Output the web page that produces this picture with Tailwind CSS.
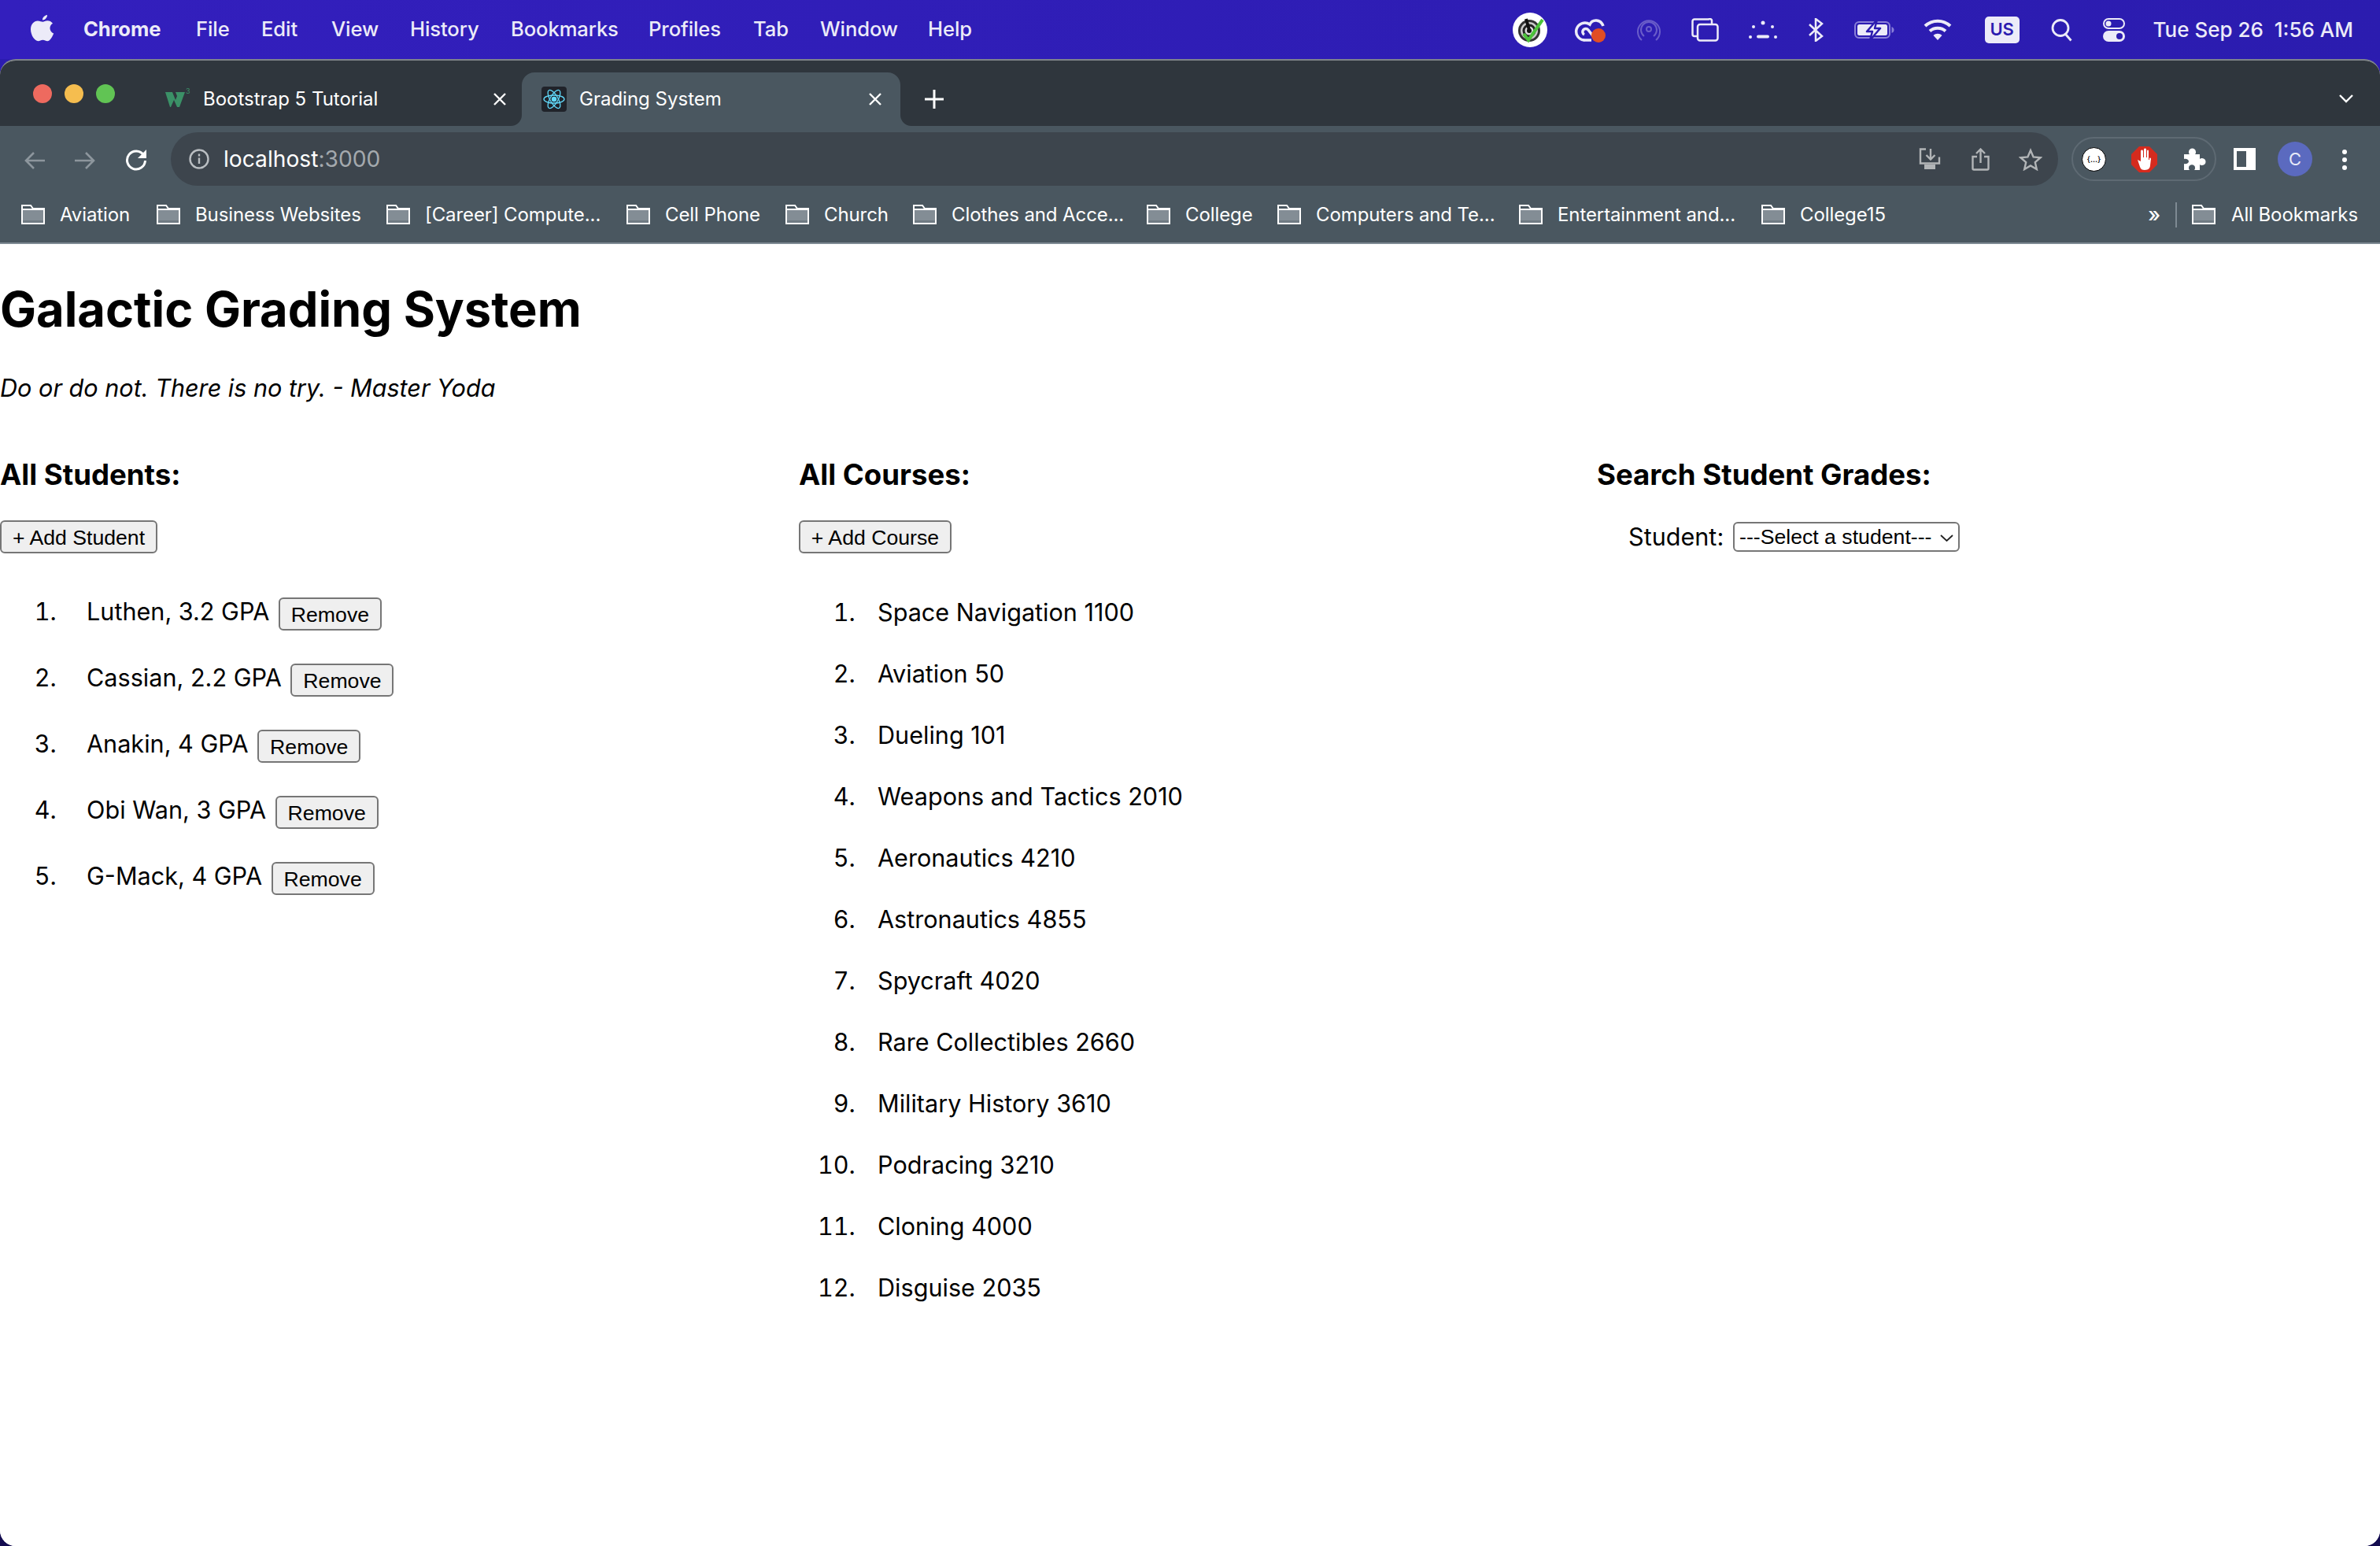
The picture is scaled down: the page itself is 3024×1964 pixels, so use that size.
<!DOCTYPE html>
<html lang="en">
<head>
<meta charset="utf-8">
<title>Grading System</title>
<script src="https://cdn.jsdelivr.net/npm/@tailwindcss/browser@4"></script>
</head>
<body class="m-0 w-[3024px] h-[1964px] overflow-hidden bg-gradient-to-b from-[#2c1cb0] from-10% to-[#140c50] to-95% font-['Inter',sans-serif] text-black">

<!-- macOS menu bar -->
<header class="h-[75px] flex items-center bg-gradient-to-r from-[#331fbd] to-[#2b1caf] text-[#ecebf8] text-[25.6px] font-medium tracking-[-0.1px]">
  <svg class="ml-[39px] w-[30px] h-[34px] mb-[4px]" viewBox="0 0 30 34" fill="#ecebf8"><path d="M21 0c.3 3-2.600 6.600-6 6.500C14.600 3.500 17.800.4 21 0zM15.300 8.700c1.500 0 3.300-1.500 6.100-1.500 2.300 0 4.900 1.100 6.600 3.500-5.300 3-4.400 10.500 1.200 12.700-1.200 3.100-4.500 9.800-7.900 9.800-2.300 0-3.500-1.500-5.900-1.500s-3.800 1.500-5.900 1.500C5 33.200 0 25.500 0 18.300 0 11.600 4.300 7.400 8.900 7.400c2.900 0 4.900 1.300 6.400 1.300z"/></svg>
  <nav class="flex items-center ml-[37px]">
    <span class="w-[143px] font-bold">Chrome</span>
    <span class="w-[83px]">File</span>
    <span class="w-[89px]">Edit</span>
    <span class="w-[100px]">View</span>
    <span class="w-[128px]">History</span>
    <span class="w-[175px]">Bookmarks</span>
    <span class="w-[133px]">Profiles</span>
    <span class="w-[85px]">Tab</span>
    <span class="w-[137px]">Window</span>
    <span>Help</span>
  </nav>
  <div class="ml-auto flex items-center h-full pr-[34px]">
    <!-- profile radar -->
    <svg class="w-[44px] h-[44px]" viewBox="0 0 44 44"><circle cx="22" cy="22" r="22" fill="#fff"/><circle cx="21" cy="23" r="14" fill="#333"/><circle cx="21" cy="23" r="11" fill="#ccc"/><circle cx="21" cy="23" r="8.500" fill="#222"/><circle cx="21" cy="23" r="5.500" fill="#ddd"/><circle cx="21" cy="23" r="3" fill="#111"/><path d="M17 8l4 14" stroke="#111" stroke-width="4"/><path d="M14 27l6 8L38 9" fill="none" stroke="#4cc33a" stroke-width="4"/></svg>
    <!-- creative cloud -->
    <svg class="ml-[34px] w-[42px] h-[32px]" viewBox="0 0 42 32" fill="none" stroke="#ecebf8" stroke-width="3.500"><path d="M13 29a11 11 0 1 1 7-20c3-7 14-7 17 2"/><path d="M13 22a4 4 0 1 1 5-6l7 9"/><path d="M12 29h10"/><circle cx="31" cy="23" r="9" fill="#e14d24" stroke="none"/></svg>
    <!-- airdrop -->
    <svg class="ml-[38px] w-[30px] h-[30px]" viewBox="0 0 30 30" fill="none" stroke="#6a5dc9" stroke-width="2"><circle cx="15" cy="14" r="3"/><path d="M9 23a10 10 0 1 1 12 0"/><path d="M6 28a14 14 0 1 1 18 0"/></svg>
    <!-- stage manager -->
    <svg class="ml-[39px] w-[35px] h-[30px]" viewBox="0 0 35 30" fill="none" stroke="#ecebf8" stroke-width="2.500"><path d="M7 23H4a2.500 2.500 0 0 1-2.500-2.500V4A2.500 2.500 0 0 1 4 1.500h18A2.500 2.500 0 0 1 26 4v3"/><rect x="8" y="8" width="25.500" height="20.500" rx="3"/></svg>
    <!-- dots -->
    <svg class="ml-[38px] w-[36px] h-[24px]" viewBox="0 0 36 24" fill="#ecebf8"><circle cx="18" cy="3" r="2.500"/><circle cx="6" cy="8" r="2"/><circle cx="30" cy="8" r="2"/><circle cx="2" cy="21" r="2"/><circle cx="34" cy="21" r="2"/><rect x="10" y="18.500" width="16" height="4" rx="2"/></svg>
    <!-- bluetooth -->
    <svg class="ml-[40px] w-[19px] h-[30px]" viewBox="0 0 19 30" fill="none" stroke="#ecebf8" stroke-width="2.500"><path d="M1 8l16 15-8 6V1l8 6L1 22"/></svg>
    <!-- battery -->
    <svg class="ml-[39px] w-[51px] h-[26px]" viewBox="0 0 51 26"><rect x="1" y="3" width="44" height="20" rx="5" fill="none" stroke="#8a80d8" stroke-width="2"/><rect x="4" y="6" width="38" height="14" rx="2.500" fill="#ecebf8"/><path d="M47.500 9v8c2-1 3-2 3-4s-1-3-3-4z" fill="#8a80d8"/><path d="M29 0L16 15h7l-3 11 13-15h-7z" fill="#ecebf8" stroke="#2c1cb0" stroke-width="2.500" stroke-linejoin="round"/></svg>
    <!-- wifi -->
    <svg class="ml-[37px] w-[36px] h-[28px]" viewBox="0 0 36 28" fill="none" stroke="#ecebf8" stroke-width="4"><path d="M2 9c9-8.500 23-8.500 32 0"/><path d="M8 15.500c5.500-5 14.500-5 20 0"/><path d="M18 27l-5.500-6c3-3 8-3 11 0z" fill="#ecebf8" stroke="none"/></svg>
    <!-- US -->
    <span class="ml-[42px] w-[44px] h-[34px] rounded-[5px] bg-[#ecebf8] text-[#2c1cb0] text-[22px] font-semibold flex items-center justify-center">US</span>
    <!-- search -->
    <svg class="ml-[40px] w-[27px] h-[30px]" viewBox="0 0 27 30" fill="none" stroke="#ecebf8" stroke-width="2.800"><circle cx="12" cy="12.500" r="10"/><path d="M18.500 20.500l7 8"/></svg>
    <!-- control centre -->
    <svg class="ml-[39px] w-[28px] h-[30px]" viewBox="0 0 28 30"><rect x="1" y="1" width="26" height="12" rx="6" fill="none" stroke="#ecebf8" stroke-width="2"/><circle cx="7" cy="7" r="3.500" fill="#ecebf8"/><rect y="16" width="28" height="14" rx="7" fill="#ecebf8"/><circle cx="21" cy="23" r="4" fill="#2c1cb0"/></svg>
    <span class="ml-[36px] whitespace-pre text-[26px] tracking-[0px]">Tue Sep 26  1:56 AM</span>
  </div>
</header>

<!-- window -->
<div class="h-[1889px] rounded-[20px] bg-white overflow-hidden flex flex-col border-t-2 border-[#7e8489]">
  <!-- tab strip -->
  <div class="h-[83px] shrink-0 bg-[#2f363d] flex items-end text-white text-[24px]">
    <div class="flex gap-[16px] ml-[42px] self-start mt-[30px]">
      <span class="w-[24px] h-[24px] rounded-full bg-[#ee6a5f]"></span>
      <span class="w-[24px] h-[24px] rounded-full bg-[#f5bd4f]"></span>
      <span class="w-[24px] h-[24px] rounded-full bg-[#61c454]"></span>
    </div>
    <div class="w-[453px] h-[68px] ml-[64px] flex items-center">
      <svg class="w-[33px] h-[30px]" viewBox="0 0 33 30"><path d="M0 6h9l4 10 2-5-2-5h12l-7 19h-3l-4-9-4 9H6z" fill="#3b9167"/><text x="26" y="8" font-size="9" fill="#3b9167">3</text></svg>
      <span class="ml-[15px] w-[368px]">Bootstrap 5 Tutorial</span>
      <svg class="w-[18px] h-[18px]" viewBox="0 0 18 18" stroke="#fff" stroke-width="2.400"><path d="M2 2l14 14M16 2L2 16"/></svg>
    </div>
    <div class="relative w-[481px] h-[68px] rounded-t-[16px] bg-[#4a5760] flex items-center pl-[25px]">
      <svg class="absolute left-[-14px] bottom-0 w-[14px] h-[14px]" viewBox="0 0 14 14" fill="#4a5760"><path d="M14 0v14H0A14 14 0 0 0 14 0z"/></svg>
      <svg class="absolute right-[-14px] bottom-0 w-[14px] h-[14px]" viewBox="0 0 14 14" fill="#4a5760"><path d="M0 0v14h14A14 14 0 0 1 0 0z"/></svg>
      <span class="w-[32px] h-[32px] bg-[#20232a] rounded-[4px] flex items-center justify-center">
        <svg class="w-[30px] h-[30px]" viewBox="0 0 30 30" fill="none" stroke="#61dafb" stroke-width="1.300"><circle cx="15" cy="15" r="2.600" fill="#61dafb"/><ellipse cx="15" cy="15" rx="13" ry="5"/><ellipse cx="15" cy="15" rx="13" ry="5" transform="rotate(60 15 15)"/><ellipse cx="15" cy="15" rx="13" ry="5" transform="rotate(120 15 15)"/></svg>
      </span>
      <span class="ml-[16px] w-[367px]">Grading System</span>
      <svg class="w-[18px] h-[18px]" viewBox="0 0 18 18" stroke="#fff" stroke-width="2.400"><path d="M2 2l14 14M16 2L2 16"/></svg>
    </div>
    <svg class="ml-[31px] mb-[22px] w-[24px] h-[24px]" viewBox="0 0 24 24" stroke="#fff" stroke-width="3"><path d="M12 0v24M0 12h24"/></svg>
    <svg class="ml-auto mr-[34px] mb-[29px] w-[18px] h-[11px]" viewBox="0 0 18 11" fill="none" stroke="#fff" stroke-width="2.400"><path d="M1 1l8 8 8-8"/></svg>
  </div>

  <!-- toolbar -->
  <div class="h-[85px] shrink-0 bg-[#4a5760] flex items-start pt-[8px] relative">
    <svg class="ml-[31px] mt-[24px] w-[26px] h-[24px]" viewBox="0 0 26 24" fill="none" stroke="#8d969d" stroke-width="2.600"><path d="M26 12H2M12 2L2 12l10 10"/></svg>
    <svg class="ml-[38px] mt-[24px] w-[26px] h-[24px]" viewBox="0 0 26 24" fill="none" stroke="#8d969d" stroke-width="2.600"><path d="M0 12h24M14 2l10 10-10 10"/></svg>
    <svg class="ml-[38px] mt-[21px] w-[28px] h-[28px]" viewBox="0 0 28 28" fill="none" stroke="#fff" stroke-width="3"><path d="M23.500 8A11.500 11.500 0 1 0 25.500 15"/><path d="M27 1v11H16z" fill="#fff" stroke="none"/></svg>
    <div class="ml-[30px] w-[2398px] h-[68px] rounded-full bg-[#3d454d] flex items-center pl-[23px] pr-[20px]">
      <svg class="w-[26px] h-[26px]" viewBox="0 0 26 26" fill="none" stroke="#b9bec2" stroke-width="2.400"><circle cx="13" cy="13" r="11.500"/><path d="M13 11.500v7.500"/><path d="M13 6.500v3" /></svg>
      <span class="ml-[18px] text-[28.2px] text-white">localhost<span class="text-[#a4a9ad]">:3000</span></span>
      <svg class="ml-auto w-[28px] h-[28px]" viewBox="0 0 28 28" fill="none" stroke="#b2b5b7" stroke-width="2.400"><path d="M9 1.500H2v18h24v-8"/><path d="M15 1v13M9.500 9l5.500 5.500L20.500 9"/><rect x="7" y="21" width="14" height="6" fill="#b2b5b7" stroke="none"/></svg>
      <svg class="ml-[39px] w-[23px] h-[29px]" viewBox="0 0 23 29" fill="none" stroke="#b2b5b7" stroke-width="2.400"><path d="M7 11H1.500v15a1.500 1.500 0 0 0 1.500 1.500h17a1.500 1.500 0 0 0 1.500-1.500V11H16"/><path d="M11.500 19V2M6 7l5.500-5.500L17 7"/></svg>
      <svg class="ml-[37px] w-[30px] h-[29px]" viewBox="0 0 30 29" fill="none" stroke="#b2b5b7" stroke-width="2.400"><path d="M15 3l3.600 8.400 9 .8-6.800 6 2 8.800L15 22.400 7.200 27l2-8.800-6.800-6 9-.8z"/></svg>
    </div>
    <div class="ml-[17px] mt-[6px] w-[184px] h-[56px] rounded-full border-2 border-[#5e6a73] flex items-center pl-[11px]">
      <span class="w-[31px] h-[31px] rounded-full bg-white border border-black text-black text-[10px] font-medium flex items-center justify-center">{...}</span>
      <svg class="ml-[32px] w-[33px] h-[33px]" viewBox="0 0 33 33"><path d="M10 0h13l10 10v13L23 33H10L0 23V10z" fill="#d52b1e"/><path d="M8 17l3 9c1 3 3 4 6 4 5 0 7-3 7-6l1-8c0-2-2-2-2-.5V17h-1V6c0-2-2-2-2 0v8h-1V4c0-2-3-2-3 0v10h-1V6c0-2-3-2-3 0v13z" fill="#fff"/></svg>
      <svg class="ml-[33px] w-[30px] h-[29px]" viewBox="0 0 30 29" fill="#fff"><path d="M1 8h7c-1-1-1-2-1-3 0-6 9-6 9 0 0 1 0 2-1 3h6v6c1-1 2-1 3-1 6 0 6 9 0 9-1 0-2 0-3-1v7H14c1-1 1-2 1-3 0-5-8-5-8 0 0 1 0 2 1 3H1v-8c3 1 6-1 6-3s-3-4-6-3z"/></svg>
    </div>
    <svg class="ml-[22px] mt-[20px] w-[28px] h-[28px]" viewBox="0 0 28 28"><path fill="#fff" fill-rule="evenodd" d="M0 0h28v28H0zM4 4v20h12V4z"/></svg>
    <span class="ml-[28px] mt-[12px] w-[44px] h-[44px] rounded-full bg-[#5b6abf] text-[#e7e9f7] text-[22px] flex items-center justify-center">C</span>
    <svg class="ml-[36px] mt-[21px] w-[10px] h-[28px]" viewBox="0 0 10 28" fill="#fff"><circle cx="5" cy="4" r="3"/><circle cx="5" cy="14" r="3"/><circle cx="5" cy="24" r="3"/></svg>
  </div>

  <!-- bookmarks bar -->
  <div class="h-[65px] shrink-0 bg-[#4a5760] border-b-2 border-[#7e8a93] flex items-center pb-[8px] pl-[27px] text-white text-[24px] tracking-[-0.1px]">
    <div class="w-[172px] flex items-center gap-[19px]"><svg class="w-[30px] h-[25px]" viewBox="0 0 30 25"><path d="M1 1h11l3 4h14v19H1z" fill="#4a5760" stroke="#fff" stroke-width="2"/><rect x="2" y="7" width="26" height="16" fill="#838d95"/><rect x="2" y="20" width="26" height="3" fill="#6f7a83"/><path d="M1 6h28" stroke="#fff" stroke-width="2"/></svg><span>Aviation</span></div>
    <div class="w-[292px] flex items-center gap-[19px]"><svg class="w-[30px] h-[25px]" viewBox="0 0 30 25"><path d="M1 1h11l3 4h14v19H1z" fill="#4a5760" stroke="#fff" stroke-width="2"/><rect x="2" y="7" width="26" height="16" fill="#838d95"/><rect x="2" y="20" width="26" height="3" fill="#6f7a83"/><path d="M1 6h28" stroke="#fff" stroke-width="2"/></svg><span>Business Websites</span></div>
    <div class="w-[305px] flex items-center gap-[19px]"><svg class="w-[30px] h-[25px]" viewBox="0 0 30 25"><path d="M1 1h11l3 4h14v19H1z" fill="#4a5760" stroke="#fff" stroke-width="2"/><rect x="2" y="7" width="26" height="16" fill="#838d95"/><rect x="2" y="20" width="26" height="3" fill="#6f7a83"/><path d="M1 6h28" stroke="#fff" stroke-width="2"/></svg><span>[Career] Compute...</span></div>
    <div class="w-[202px] flex items-center gap-[19px]"><svg class="w-[30px] h-[25px]" viewBox="0 0 30 25"><path d="M1 1h11l3 4h14v19H1z" fill="#4a5760" stroke="#fff" stroke-width="2"/><rect x="2" y="7" width="26" height="16" fill="#838d95"/><rect x="2" y="20" width="26" height="3" fill="#6f7a83"/><path d="M1 6h28" stroke="#fff" stroke-width="2"/></svg><span>Cell Phone</span></div>
    <div class="w-[162px] flex items-center gap-[19px]"><svg class="w-[30px] h-[25px]" viewBox="0 0 30 25"><path d="M1 1h11l3 4h14v19H1z" fill="#4a5760" stroke="#fff" stroke-width="2"/><rect x="2" y="7" width="26" height="16" fill="#838d95"/><rect x="2" y="20" width="26" height="3" fill="#6f7a83"/><path d="M1 6h28" stroke="#fff" stroke-width="2"/></svg><span>Church</span></div>
    <div class="w-[297px] flex items-center gap-[19px]"><svg class="w-[30px] h-[25px]" viewBox="0 0 30 25"><path d="M1 1h11l3 4h14v19H1z" fill="#4a5760" stroke="#fff" stroke-width="2"/><rect x="2" y="7" width="26" height="16" fill="#838d95"/><rect x="2" y="20" width="26" height="3" fill="#6f7a83"/><path d="M1 6h28" stroke="#fff" stroke-width="2"/></svg><span>Clothes and Acce...</span></div>
    <div class="w-[166px] flex items-center gap-[19px]"><svg class="w-[30px] h-[25px]" viewBox="0 0 30 25"><path d="M1 1h11l3 4h14v19H1z" fill="#4a5760" stroke="#fff" stroke-width="2"/><rect x="2" y="7" width="26" height="16" fill="#838d95"/><rect x="2" y="20" width="26" height="3" fill="#6f7a83"/><path d="M1 6h28" stroke="#fff" stroke-width="2"/></svg><span>College</span></div>
    <div class="w-[307px] flex items-center gap-[19px]"><svg class="w-[30px] h-[25px]" viewBox="0 0 30 25"><path d="M1 1h11l3 4h14v19H1z" fill="#4a5760" stroke="#fff" stroke-width="2"/><rect x="2" y="7" width="26" height="16" fill="#838d95"/><rect x="2" y="20" width="26" height="3" fill="#6f7a83"/><path d="M1 6h28" stroke="#fff" stroke-width="2"/></svg><span>Computers and Te...</span></div>
    <div class="w-[308px] flex items-center gap-[19px]"><svg class="w-[30px] h-[25px]" viewBox="0 0 30 25"><path d="M1 1h11l3 4h14v19H1z" fill="#4a5760" stroke="#fff" stroke-width="2"/><rect x="2" y="7" width="26" height="16" fill="#838d95"/><rect x="2" y="20" width="26" height="3" fill="#6f7a83"/><path d="M1 6h28" stroke="#fff" stroke-width="2"/></svg><span>Entertainment and...</span></div>
    <div class="flex items-center gap-[19px]"><svg class="w-[30px] h-[25px]" viewBox="0 0 30 25"><path d="M1 1h11l3 4h14v19H1z" fill="#4a5760" stroke="#fff" stroke-width="2"/><rect x="2" y="7" width="26" height="16" fill="#838d95"/><rect x="2" y="20" width="26" height="3" fill="#6f7a83"/><path d="M1 6h28" stroke="#fff" stroke-width="2"/></svg><span>College15</span></div>
    <span class="ml-auto text-[26px] font-medium">»</span>
    <span class="ml-[19px] w-[2px] h-[32px] bg-[#7e8a93]"></span>
    <div class="ml-[18px] mr-[28px] flex items-center gap-[19px]"><svg class="w-[32px] h-[25px]" viewBox="0 0 30 25"><path d="M1 1h11l3 4h14v19H1z" fill="#4a5760" stroke="#fff" stroke-width="2"/><rect x="2" y="7" width="26" height="16" fill="#838d95"/><rect x="2" y="20" width="26" height="3" fill="#6f7a83"/><path d="M1 6h28" stroke="#fff" stroke-width="2"/></svg><span>All Bookmarks</span></div>
  </div>

  <!-- page -->
  <main class="flex-1 bg-white">
    <h1 class="mt-[44px] text-[61.4px] leading-[78px] font-bold">Galactic Grading System</h1>
    <p class="mt-[42px] text-[30.6px] leading-[38px] italic">Do or do not. There is no try. - Master Yoda</p>
    <div class="mt-[68px] grid grid-cols-[1015px_1014px_1fr]">
      <section>
        <h3 class="text-[36.6px] leading-[46px] font-bold">All Students:</h3>
        <button class="mt-[35px] block h-[42px] w-[200px] rounded-[6px] border-2 border-[#767676] bg-[#efefef] text-[26.670px] font-['Liberation_Sans',sans-serif]">+ Add Student</button>
        <ol class="mt-[51px] pl-[80px] list-decimal text-[30.6px]">
          <li class="pl-[30px] h-[84px]">Luthen, 3.2 GPA <button class="ml-[3px] align-middle h-[42px] w-[131px] rounded-[6px] border-2 border-[#767676] bg-[#efefef] text-[26.670px] font-['Liberation_Sans',sans-serif]">Remove</button></li>
          <li class="pl-[30px] h-[84px]">Cassian, 2.2 GPA <button class="ml-[3px] align-middle h-[42px] w-[131px] rounded-[6px] border-2 border-[#767676] bg-[#efefef] text-[26.670px] font-['Liberation_Sans',sans-serif]">Remove</button></li>
          <li class="pl-[30px] h-[84px]">Anakin, 4 GPA <button class="ml-[3px] align-middle h-[42px] w-[131px] rounded-[6px] border-2 border-[#767676] bg-[#efefef] text-[26.670px] font-['Liberation_Sans',sans-serif]">Remove</button></li>
          <li class="pl-[30px] h-[84px]">Obi Wan, 3 GPA <button class="ml-[3px] align-middle h-[42px] w-[131px] rounded-[6px] border-2 border-[#767676] bg-[#efefef] text-[26.670px] font-['Liberation_Sans',sans-serif]">Remove</button></li>
          <li class="pl-[30px] h-[84px]">G-Mack, 4 GPA <button class="ml-[3px] align-middle h-[42px] w-[131px] rounded-[6px] border-2 border-[#767676] bg-[#efefef] text-[26.670px] font-['Liberation_Sans',sans-serif]">Remove</button></li>
        </ol>
      </section>
      <section>
        <h3 class="text-[36.6px] leading-[46px] font-bold">All Courses:</h3>
        <button class="mt-[35px] block h-[42px] w-[194px] rounded-[6px] border-2 border-[#767676] bg-[#efefef] text-[26.670px] font-['Liberation_Sans',sans-serif]">+ Add Course</button>
        <ol class="mt-[36px] pl-[80px] list-decimal text-[30.6px] leading-[78px]">
          <li class="pl-[20px]">Space Navigation 1100</li>
          <li class="pl-[20px]">Aviation 50</li>
          <li class="pl-[20px]">Dueling 101</li>
          <li class="pl-[20px]">Weapons and Tactics 2010</li>
          <li class="pl-[20px]">Aeronautics 4210</li>
          <li class="pl-[20px]">Astronautics 4855</li>
          <li class="pl-[20px]">Spycraft 4020</li>
          <li class="pl-[20px]">Rare Collectibles 2660</li>
          <li class="pl-[20px]">Military History 3610</li>
          <li class="pl-[20px]">Podracing 3210</li>
          <li class="pl-[20px]">Cloning 4000</li>
          <li class="pl-[20px]">Disguise 2035</li>
        </ol>
      </section>
      <section>
        <h3 class="text-[36.6px] leading-[46px] font-bold">Search Student Grades:</h3>
        <div class="mt-[35px] ml-[40px] flex items-center h-[42px] text-[30.6px]">
          <label class="w-[133px]">Student:</label>
          <div class="relative w-[288px] h-[38px]">
            <select class="block appearance-none w-full h-full rounded-[6px] border-2 border-[#767676] bg-white pl-[6px] text-[26.670px] leading-[32px] font-['Liberation_Sans',sans-serif] text-black">
              <option>---Select a student---</option>
            </select>
            <svg class="absolute right-[8px] top-[16px] w-[17px] h-[9px] pointer-events-none" viewBox="0 0 17 9" fill="none" stroke="#222" stroke-width="1.800"><path d="M1 1l7.500 7L16 1"/></svg>
          </div>
        </div>
      </section>
    </div>
  </main>
</div>
</body>
</html>
